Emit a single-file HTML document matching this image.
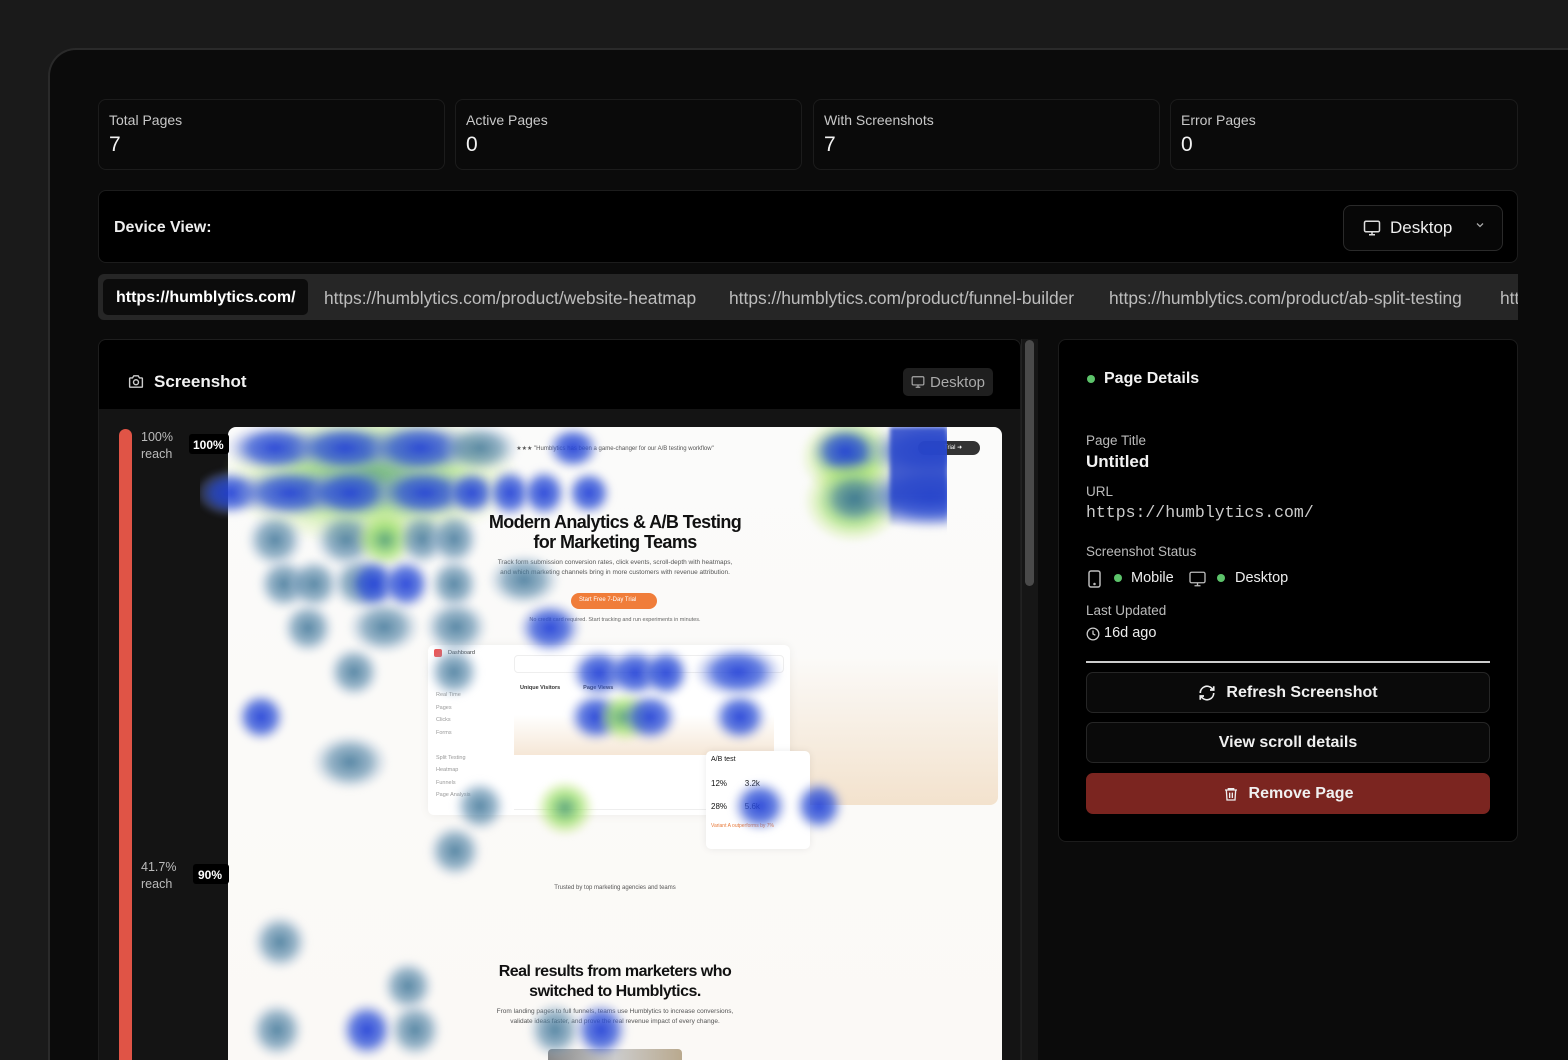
<!DOCTYPE html>
<html><head><meta charset="utf-8">
<style>
*{box-sizing:border-box;margin:0;padding:0}
html,body{width:1568px;height:1060px;overflow:hidden}
body{background:#1a1a1a;font-family:"Liberation Sans",sans-serif;color:#eee;position:relative}
.abs{position:absolute}
.panel{position:absolute;left:48px;top:48px;width:1540px;height:1012px;background:#0b0b0b;border:2px solid #2a2a2a;border-bottom:none;border-right:none;border-radius:28px 0 0 0}
.card{position:absolute;background:#0a0a0a;border:1px solid #1c1c1c;border-radius:8px}
.lbl{font-size:14px;color:#c8c8c8}
.val{font-size:21px;color:#f2f2f2}
.b{position:absolute;border-radius:50%;filter:blur(3px)}
.t{background:radial-gradient(closest-side,rgba(60,115,150,.85),rgba(80,130,165,.6) 50%,rgba(140,170,200,.25) 80%,rgba(255,255,255,0))}
.u{background:radial-gradient(closest-side,rgba(35,65,215,.95),rgba(50,85,215,.75) 50%,rgba(120,140,220,.3) 80%,rgba(255,255,255,0))}
.g{background:radial-gradient(closest-side,rgba(80,160,110,.9),rgba(150,220,100,.7) 50%,rgba(190,230,120,.3) 80%,rgba(255,255,255,0))}
.btn{position:absolute;left:1086px;width:404px;height:41px;border:1px solid #262626;border-radius:7px;background:#0a0a0a;display:flex;align-items:center;justify-content:center;font-size:16px;font-weight:bold;color:#f0f0f0;gap:10px}
.tx{font-size:5.5px;color:#999;position:absolute}
</style></head><body>
<div class="panel"></div>

<div class="card" style="left:98px;top:99px;width:347px;height:71px"><div class="lbl abs" style="left:10px;top:12px">Total Pages</div><div class="val abs" style="left:10px;top:33px">7</div></div>
<div class="card" style="left:455px;top:99px;width:347px;height:71px"><div class="lbl abs" style="left:10px;top:12px">Active Pages</div><div class="val abs" style="left:10px;top:33px">0</div></div>
<div class="card" style="left:813px;top:99px;width:347px;height:71px"><div class="lbl abs" style="left:10px;top:12px">With Screenshots</div><div class="val abs" style="left:10px;top:33px">7</div></div>
<div class="card" style="left:1170px;top:99px;width:348px;height:71px"><div class="lbl abs" style="left:10px;top:12px">Error Pages</div><div class="val abs" style="left:10px;top:33px">0</div></div>

<div class="card" style="left:98px;top:190px;width:1420px;height:73px;background:#000">
 <div class="abs" style="left:15px;top:28px;font-size:16px;font-weight:bold;color:#eee">Device View:</div>
 <div class="abs" style="left:1244px;top:14px;width:160px;height:46px;border:1px solid #2a2a2a;border-radius:8px;background:#070707">
  <svg class="abs" style="left:19px;top:13px" width="18" height="18" viewBox="0 0 24 24" fill="none" stroke="#ddd" stroke-width="2"><rect x="2" y="3" width="20" height="14" rx="2"/><path d="M8 21h8M12 17v4"/></svg>
  <div class="abs" style="left:46px;top:12px;font-size:17px;color:#eee">Desktop</div>
  <svg class="abs" style="left:130px;top:13px" width="12" height="12" viewBox="0 0 24 24" fill="none" stroke="#aaa" stroke-width="2.5"><path d="M6 9l6 6 6-6"/></svg>
 </div>
</div>

<div class="abs" style="left:98px;top:274px;width:1420px;height:46px;background:#262626;border-radius:6px 0 0 6px;overflow:hidden;white-space:nowrap;font-size:17.4px;color:#bdbdbd">
 <div class="abs" style="left:5px;top:5px;width:205px;height:36px;background:#0c0c0c;border-radius:5px;color:#fff;font-weight:bold;font-size:16px;padding:10px 0 0 13px">https://humblytics.com/</div>
 <div class="abs" style="left:226px;top:14px">https://humblytics.com/product/website-heatmap</div>
 <div class="abs" style="left:631px;top:14px">https://humblytics.com/product/funnel-builder</div>
 <div class="abs" style="left:1011px;top:14px">https://humblytics.com/product/ab-split-testing</div>
 <div class="abs" style="left:1402px;top:14px">https</div>
</div>

<!-- screenshot panel -->
<div class="abs" style="left:98px;top:339px;width:923px;height:721px;background:#141414;border:1px solid #1e1e1e;border-bottom:none;border-radius:8px 8px 0 0;overflow:hidden">
 <div class="abs" style="left:0;top:0;width:923px;height:69px;background:#000"></div>
 <svg class="abs" style="left:28px;top:33px" width="18" height="17" viewBox="0 0 24 24" fill="none" stroke="#ccc" stroke-width="2"><path d="M4 7h3l2-3h6l2 3h3a1 1 0 0 1 1 1v11a1 1 0 0 1-1 1H4a1 1 0 0 1-1-1V8a1 1 0 0 1 1-1z"/><circle cx="12" cy="13" r="3.5"/></svg>
 <div class="abs" style="left:55px;top:32px;font-size:17px;font-weight:bold;color:#f2f2f2">Screenshot</div>
 <div class="abs" style="left:804px;top:28px;width:90px;height:28px;background:#1f1f1f;border-radius:5px;font-size:15px;color:#aaa;padding:6px 0 0 27px">Desktop
  <svg class="abs" style="left:8px;top:7px" width="14" height="14" viewBox="0 0 24 24" fill="none" stroke="#aaa" stroke-width="2"><rect x="2" y="3" width="20" height="14" rx="2"/><path d="M8 21h8M12 17v4"/></svg></div>
 <div class="abs" style="left:20px;top:89px;width:13px;height:640px;background:#e05446;border-radius:7px"></div>
 <div class="abs" style="left:42px;top:89px;font-size:12.5px;color:#bbb;line-height:17px">100%<br>reach</div>
 <div class="abs" style="left:42px;top:519px;font-size:12.5px;color:#bbb;line-height:17px">41.7%<br>reach</div>
</div>

<!-- website image -->
<div class="abs" style="left:228px;top:427px;width:774px;height:633px;background:linear-gradient(#fbfbfa,#fbf9f6);border-radius:8px 8px 0 0;overflow:hidden;color:#111">
 <div class="abs" style="left:560px;top:230px;width:210px;height:148px;background:linear-gradient(#fbfaf8,#f3e2cd);border-radius:0 0 8px 8px"></div>
 <div class="abs" style="left:0;top:18px;width:774px;text-align:center;font-size:6px;color:#555">★★★ "Humblytics has been a game-changer for our A/B testing workflow"</div>
 <div class="abs" style="left:0;top:85px;width:774px;text-align:center;font-size:18px;font-weight:bold;letter-spacing:-.6px;line-height:20px">Modern Analytics &amp; A/B Testing<br>for Marketing Teams</div>
 <div class="abs" style="left:0;top:131px;width:774px;text-align:center;font-size:6.5px;color:#555;line-height:10px">Track form submission conversion rates, click events, scroll-depth with heatmaps,<br>and which marketing channels bring in more customers with revenue attribution.</div>
 <div class="abs" style="left:343px;top:166px;width:86px;height:16px;background:#f07d3a;border-radius:8px;color:#fff;font-size:6px;padding:4px 0 0 8px">Start Free 7-Day Trial</div>
 <div class="abs" style="left:0;top:190px;width:774px;text-align:center;font-size:5.5px;color:#666">No credit card required. Start tracking and run experiments in minutes.</div>
 <div class="abs" style="left:200px;top:218px;width:362px;height:170px;background:#fff;border-radius:6px;box-shadow:0 0 10px rgba(0,0,0,.06)">
  <div class="abs" style="left:6px;top:4px;width:8px;height:8px;background:#e55;border-radius:2px"></div>
  <div class="tx" style="left:20px;top:5px;color:#333">Dashboard</div>
  <div class="tx" style="left:8px;top:44px;line-height:12.5px">Real Time<br>Pages<br>Clicks<br>Forms<br><br>Split Testing<br>Heatmap<br>Funnels<br>Page Analysis</div>
  <div class="abs" style="left:86px;top:10px;width:270px;height:18px;border:1px solid #eee;border-radius:4px"></div>
  <div class="tx" style="left:92px;top:40px;color:#333;font-weight:bold">Unique Visitors &nbsp;&nbsp;&nbsp;&nbsp;&nbsp;&nbsp;&nbsp;&nbsp;&nbsp;&nbsp;&nbsp;&nbsp;&nbsp; Page Views</div>
  <div class="abs" style="left:86px;top:70px;width:260px;height:40px;background:linear-gradient(rgba(243,225,205,0),rgba(243,225,205,.8))"></div>
  <div class="abs" style="left:86px;top:164px;width:270px;height:1px;background:#eee"></div>
 </div>
 <div class="abs" style="left:478px;top:324px;width:104px;height:98px;background:#fff;border-radius:5px;box-shadow:0 0 8px rgba(0,0,0,.08);font-size:7px;padding:5px">A/B test<div style="margin-top:16px;font-size:8px">12% &nbsp;&nbsp;&nbsp;&nbsp;&nbsp;&nbsp; 3.2k</div><div style="margin-top:14px;font-size:8px">28% &nbsp;&nbsp;&nbsp;&nbsp;&nbsp;&nbsp; 5.6k</div><div style="margin-top:12px;font-size:5px;color:#e87a3a">Variant A outperforms by 7%</div></div>
 <div class="abs" style="left:690px;top:14px;width:62px;height:14px;background:#333;border-radius:7px;color:#fff;font-size:6px;padding:3px 0 0 26px">Trial ➜</div>
 <div class="abs" style="left:0;top:458px;width:774px;text-align:center;font-size:6px;color:#555">Trusted by top marketing agencies and teams</div>
 <div class="abs" style="left:0;top:535px;width:774px;text-align:center;font-size:16px;font-weight:bold;letter-spacing:-.5px;line-height:20px">Real results from marketers who<br>switched to Humblytics.</div>
 <div class="abs" style="left:0;top:580px;width:774px;text-align:center;font-size:6.5px;color:#555;line-height:10px">From landing pages to full funnels, teams use Humblytics to increase conversions,<br>validate ideas faster, and prove the real revenue impact of every change.</div>
 <div class="abs" style="left:320px;top:622px;width:134px;height:20px;background:linear-gradient(90deg,#888,#ccc,#b9a98e);border-radius:4px 4px 0 0"></div>
</div>

<!-- heatmap -->
<div class="abs" style="left:200px;top:427px;width:747px;height:633px;overflow:hidden">
 <div class="b g" style="left:20px;top:-20px;width:300px;height:140px;opacity:.9"></div>
 <div class="b u" style="left:25px;top:-4px;width:100px;height:50px"></div>
 <div class="b u" style="left:90px;top:-4px;width:110px;height:50px"></div>
 <div class="b u" style="left:165px;top:-6px;width:110px;height:54px"></div>
 <div class="b t" style="left:240px;top:-4px;width:80px;height:50px"></div>
 <div class="b u" style="left:345px;top:-2px;width:56px;height:46px"></div>
 <div class="b u" style="left:-5px;top:42px;width:70px;height:48px"></div>
 <div class="b u" style="left:35px;top:40px;width:110px;height:52px"></div>
 <div class="b u" style="left:105px;top:40px;width:90px;height:52px"></div>
 <div class="b u" style="left:175px;top:40px;width:100px;height:52px"></div>
 <div class="b u" style="left:246px;top:42px;width:52px;height:48px"></div>
 <div class="b u" style="left:286px;top:40px;width:48px;height:52px"></div>
 <div class="b u" style="left:320px;top:40px;width:48px;height:52px"></div>
 <div class="b u" style="left:365px;top:42px;width:48px;height:48px"></div>
 <div class="b t" style="left:45px;top:84px;width:60px;height:58px"></div>
 <div class="b t" style="left:113px;top:84px;width:66px;height:58px"></div>
 <div class="b g" style="left:155px;top:84px;width:60px;height:58px"></div>
 <div class="b t" style="left:196px;top:84px;width:52px;height:56px"></div>
 <div class="b t" style="left:228px;top:84px;width:52px;height:56px"></div>
 <div class="b t" style="left:57px;top:130px;width:54px;height:54px"></div>
 <div class="b t" style="left:87px;top:130px;width:54px;height:54px"></div>
 <div class="b t" style="left:130px;top:128px;width:60px;height:56px"></div>
 <div class="b u" style="left:148px;top:130px;width:52px;height:54px"></div>
 <div class="b u" style="left:180px;top:130px;width:52px;height:54px"></div>
 <div class="b t" style="left:228px;top:130px;width:52px;height:54px"></div>
 <div class="b t" style="left:287px;top:126px;width:74px;height:54px"></div>
 <div class="b t" style="left:81px;top:174px;width:54px;height:54px"></div>
 <div class="b t" style="left:147px;top:172px;width:74px;height:56px"></div>
 <div class="b t" style="left:223px;top:172px;width:66px;height:56px"></div>
 <div class="b u" style="left:317px;top:174px;width:66px;height:54px"></div>
 <div class="b t" style="left:127px;top:218px;width:54px;height:54px"></div>
 <div class="b t" style="left:227px;top:218px;width:54px;height:54px"></div>
 <div class="b u" style="left:369px;top:220px;width:60px;height:52px"></div>
 <div class="b u" style="left:405px;top:220px;width:60px;height:52px"></div>
 <div class="b u" style="left:441px;top:220px;width:50px;height:52px"></div>
 <div class="b u" style="left:493px;top:218px;width:90px;height:54px"></div>
 <div class="b u" style="left:35px;top:264px;width:52px;height:52px"></div>
 <div class="b u" style="left:367px;top:264px;width:58px;height:52px"></div>
 <div class="b g" style="left:397px;top:264px;width:56px;height:52px"></div>
 <div class="b u" style="left:421px;top:264px;width:58px;height:52px"></div>
 <div class="b u" style="left:511px;top:264px;width:58px;height:52px"></div>
 <div class="b t" style="left:111px;top:306px;width:78px;height:58px"></div>
 <div class="b t" style="left:253px;top:352px;width:54px;height:54px"></div>
 <div class="b g" style="left:335px;top:352px;width:60px;height:58px"></div>
 <div class="b u" style="left:531px;top:352px;width:58px;height:54px"></div>
 <div class="b u" style="left:593px;top:352px;width:52px;height:54px"></div>
 <div class="b t" style="left:227px;top:396px;width:56px;height:56px"></div>
 <div class="b t" style="left:51px;top:486px;width:58px;height:58px"></div>
 <div class="b t" style="left:181px;top:532px;width:54px;height:54px"></div>
 <div class="b t" style="left:49px;top:574px;width:56px;height:58px"></div>
 <div class="b u" style="left:139px;top:574px;width:56px;height:58px"></div>
 <div class="b t" style="left:187px;top:574px;width:56px;height:58px"></div>
 <div class="b t" style="left:327px;top:574px;width:56px;height:58px"></div>
 <div class="b u" style="left:373px;top:574px;width:56px;height:58px"></div>
 <div class="b g" style="left:600px;top:-12px;width:100px;height:84px"></div>
 <div class="b u" style="left:610px;top:-2px;width:70px;height:52px"></div>
 <div class="b u" style="left:665px;top:-6px;width:130px;height:60px"></div>
 <div class="b g" style="left:603px;top:32px;width:100px;height:84px"></div>
 <div class="b t" style="left:620px;top:44px;width:70px;height:54px"></div>
 <div class="b u" style="left:660px;top:34px;width:140px;height:70px"></div>
 <div class="abs" style="left:690px;top:0;width:57px;height:100px;background:linear-gradient(rgba(40,70,200,.85),rgba(40,70,200,.85) 70%,rgba(120,140,210,0));filter:blur(2px)"></div>
</div>

<div class="abs" style="left:189px;top:434px;width:40px;height:20px;background:#000;border-radius:3px;font-size:12px;font-weight:bold;color:#fff;padding:4px 0 0 4px">100%</div>
<div class="abs" style="left:193px;top:864px;width:36px;height:20px;background:#000;border-radius:3px;font-size:12px;font-weight:bold;color:#fff;padding:4px 0 0 5px">90%</div>

<!-- scrollbar -->
<div class="abs" style="left:1021px;top:339px;width:17px;height:721px;background:#161616;border-left:1px solid #222"></div>
<div class="abs" style="left:1025px;top:340px;width:9px;height:246px;background:#4a4a4a;border-radius:5px"></div>

<!-- right panel -->
<div class="card" style="left:1058px;top:339px;width:460px;height:503px;background:#000;border-color:#1c1c1c"></div>
<div class="abs" style="left:1087px;top:375px;width:8px;height:8px;border-radius:50%;background:#5cc36a"></div>
<div class="abs" style="left:1104px;top:370px;font-size:16px;font-weight:bold;color:#f2f2f2">Page Details</div>
<div class="abs" style="left:1086px;top:433px;font-size:13.5px;color:#bbb">Page Title</div>
<div class="abs" style="left:1086px;top:452px;font-size:17px;font-weight:bold;color:#f2f2f2">Untitled</div>
<div class="abs" style="left:1086px;top:484px;font-size:13.5px;color:#bbb">URL</div>
<div class="abs" style="left:1086px;top:503px;font-size:16.5px;font-family:'Liberation Mono',monospace;color:#ccc">https://humblytics.com/</div>
<div class="abs" style="left:1086px;top:544px;font-size:13.5px;color:#bbb">Screenshot Status</div>
<svg class="abs" style="left:1087px;top:570px" width="15" height="18" viewBox="0 0 15 18" fill="none" stroke="#bbb" stroke-width="1.5"><rect x="2" y="1" width="11" height="16" rx="2"/><circle cx="7.5" cy="14" r=".5" fill="#bbb"/></svg>
<div class="abs" style="left:1114px;top:574px;width:8px;height:8px;border-radius:50%;background:#5cc36a"></div>
<div class="abs" style="left:1131px;top:570px;font-size:14.5px;color:#eee">Mobile</div>
<svg class="abs" style="left:1188px;top:570px" width="19" height="18" viewBox="0 0 24 24" fill="none" stroke="#bbb" stroke-width="1.8"><rect x="2" y="3" width="20" height="14" rx="2"/><path d="M8 21h8M12 17v4"/></svg>
<div class="abs" style="left:1217px;top:574px;width:8px;height:8px;border-radius:50%;background:#5cc36a"></div>
<div class="abs" style="left:1235px;top:570px;font-size:14.5px;color:#eee">Desktop</div>
<div class="abs" style="left:1086px;top:603px;font-size:13.5px;color:#bbb">Last Updated</div>
<svg class="abs" style="left:1086px;top:627px" width="14" height="14" viewBox="0 0 24 24" fill="none" stroke="#ccc" stroke-width="2.2"><circle cx="12" cy="12" r="10"/><path d="M12 6v6l4 2"/></svg>
<div class="abs" style="left:1104px;top:625px;font-size:14.5px;color:#eee">16d ago</div>
<div class="abs" style="left:1086px;top:661px;width:404px;height:2px;background:#ccc"></div>
<div class="btn" style="top:672px"><svg width="18" height="18" viewBox="0 0 24 24" fill="none" stroke="#eee" stroke-width="2.2"><path d="M21 12a9 9 0 0 1-15.5 6.2L3 16M3 12a9 9 0 0 1 15.5-6.2L21 8M21 3v5h-5M3 21v-5h5"/></svg>Refresh Screenshot</div>
<div class="btn" style="top:722px">View scroll details</div>
<div class="btn" style="top:773px;background:#7b2520;border-color:#7b2520"><svg width="16" height="18" viewBox="0 0 24 24" fill="none" stroke="#eee" stroke-width="2"><path d="M3 6h18M8 6V4h8v2M5 6l1 15h12l1-15M10 10v8M14 10v8"/></svg>Remove Page</div>
</body></html>
